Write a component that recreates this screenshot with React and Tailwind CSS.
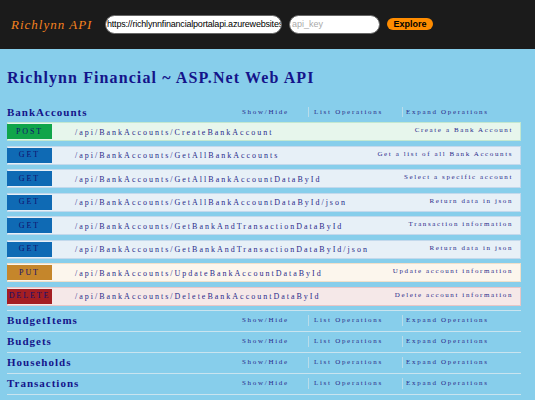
import React from "react";

const serif = "font-['Liberation_Serif','Times_New_Roman',serif]";

const METHOD_STYLES = {
  POST: { row: "bg-[#e7f6ec] border-[#c3e8d1]", badge: "bg-[#10a54a]" },
  GET: { row: "bg-[#e7f0f7] border-[#c3d9ec]", badge: "bg-[#0f6ab4]" },
  PUT: { row: "bg-[#fcf6ed] border-[#f0e0ca]", badge: "bg-[#c5862b]" },
  DELETE: { row: "bg-[#f5e8e8] border-[#e8c6c7]", badge: "bg-[#a41e22]" },
};

const bankOps = [
  { method: "POST", path: "/api/BankAccounts/CreateBankAccount", desc: "Create a Bank Account" },
  { method: "GET", path: "/api/BankAccounts/GetAllBankAccounts", desc: "Get a list of all Bank Accounts" },
  { method: "GET", path: "/api/BankAccounts/GetAllBankAccountDataById", desc: "Select a specific account" },
  { method: "GET", path: "/api/BankAccounts/GetAllBankAccountDataById/json", desc: "Return data in json" },
  { method: "GET", path: "/api/BankAccounts/GetBankAndTransactionDataById", desc: "Transaction information" },
  { method: "GET", path: "/api/BankAccounts/GetBankAndTransactionDataById/json", desc: "Return data in json" },
  { method: "PUT", path: "/api/BankAccounts/UpdateBankAccountDataById", desc: "Update account information" },
  { method: "DELETE", path: "/api/BankAccounts/DeleteBankAccountDataById", desc: "Delete account information" },
];

const otherResources = ["BudgetItems", "Budgets", "Households", "Transactions"];

const ResourceHeader = ({ name }) => (
  <div className="flex items-center h-[20px]">
    <h2 className="text-[11px] font-bold tracking-[1px] text-[#14148a]">{name}</h2>
    <ul className="ml-auto flex text-[7px] tracking-[1.7px] text-[#2a2a8a] whitespace-nowrap">
      <li className="w-[66px]">Show/Hide</li>
      <li className="w-[94px] border-l border-[#b8dcea] pl-[5px]">List Operations</li>
      <li className="w-[119px] border-l border-[#b8dcea] pl-[3px]">Expand Operations</li>
    </ul>
  </div>
);

const OperationRow = ({ method, path, desc }) => {
  const s = METHOD_STYLES[method];
  return (
    <div className={`flex h-[19px] border ${s.row}`}>
      <span
        className={`${s.badge} shrink-0 w-[45px] h-[15px] mt-[1px] -ml-px flex items-center justify-center text-[8px] tracking-[1.9px] text-[#10106e]`}
      >
        {method}
      </span>
      <span className="ml-[23px] self-center mt-[2px] text-[8px] tracking-[2px] text-[#2a2a8a] whitespace-nowrap">
        {path}
      </span>
      <span className="ml-auto pr-[7px] pt-[2px] text-[7px] tracking-[1.6px] text-[#2a2a8a] whitespace-nowrap">
        {desc}
      </span>
    </div>
  );
};

export default function App() {
  return (
    <div className={`w-[535px] h-[400px] overflow-hidden bg-[#87ceeb] ${serif}`}>
      {/* top bar */}
      <div className="h-[49px] bg-[#1b1b1b] flex items-center pl-[11px]">
        <span className="shrink-0 w-[94px] whitespace-nowrap italic text-[13px] tracking-[1px] text-[#f5821f]">
          Richlynn API
        </span>
        <input
          readOnly
          defaultValue="https://richlynnfinancialportalapi.azurewebsites.net/swagger/docs/v1"
          className="shrink-0 w-[177px] h-[19px] rounded-full bg-white border border-[#666] pl-[1px] mt-[-1px] text-[9px] text-black tracking-[-0.2px] font-['Liberation_Sans',Arial,sans-serif] outline-none"
        />
        <input
          readOnly
          placeholder="api_key"
          className="shrink-0 ml-[7px] w-[91px] h-[19px] rounded-full bg-white border border-[#666] pl-[2px] mt-[-1px] text-[9px] placeholder:text-[#aaa] font-['Liberation_Sans',Arial,sans-serif] outline-none"
        />
        <button className="shrink-0 ml-[7px] w-[46px] h-[12px] rounded-full bg-[#ff8c00] text-[9px] font-bold text-black leading-none font-['Liberation_Sans',Arial,sans-serif] mt-[-1px]">
          Explore
        </button>
      </div>

      <div className="pl-[7px] pr-[14px]">
        <h1 className="pt-[17px] h-[53px] text-[16px] font-bold tracking-[1.1px] text-[#14148a] whitespace-nowrap">
          Richlynn Financial ~ ASP.Net Web API
        </h1>

        <div className="border-b border-[#c9e4ef] pb-[4px]">
          <ResourceHeader name="BankAccounts" />
          <div className="flex flex-col gap-[4.5px]">
            {bankOps.map((op, i) => (
              <OperationRow key={i} {...op} />
            ))}
          </div>
        </div>

        {otherResources.map((name) => (
          <div key={name} className="border-b border-[#c9e4ef] h-[21px] flex flex-col justify-center">
            <ResourceHeader name={name} />
          </div>
        ))}
      </div>
    </div>
  );
}
